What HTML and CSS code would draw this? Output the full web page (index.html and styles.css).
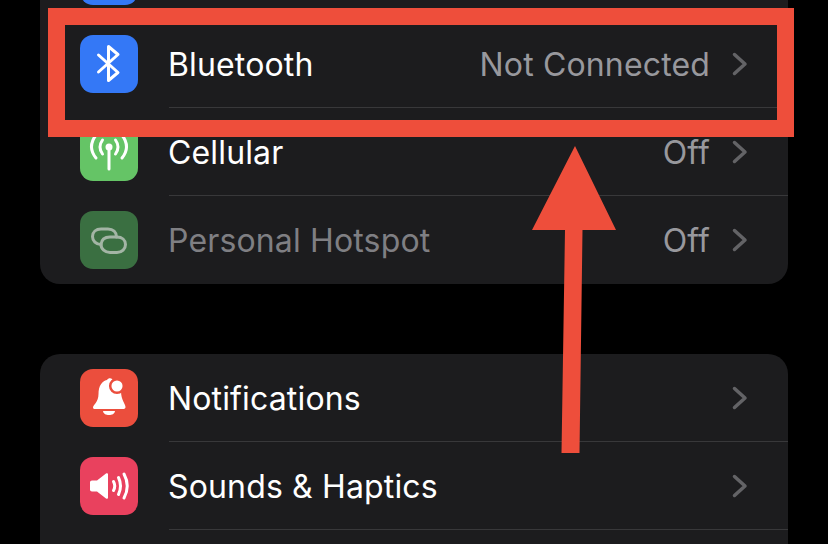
FILE: index.html
```html
<!DOCTYPE html>
<html lang="en">
<head>
    <meta charset="utf-8">
    <title>Settings</title>
    <link rel="stylesheet" href="styles.css">
</head>
<body>
    <div class="page">
        <div class="group group-first">
            <div class="row">
                <div class="icon icon-blue"></div>
                <div class="row-body"></div>
            </div>
            <div class="row">
                <div class="icon icon-blue">
                    <svg viewBox="0 0 58 58"><path class="stroke hair" d="M18.500 20 L38 37.500 L28.500 45.500 V11.500 L38 19.500 L18.500 37"/></svg>
                </div>
                <div class="row-body">
                    <span class="label">Bluetooth</span>
                    <span class="value">Not Connected</span>
                    <svg class="chevron" viewBox="0 0 16 24"><path d="M2.5 2.5 L13 12 L2.5 21.5"/></svg>
                </div>
            </div>
            <div class="row">
                <div class="icon icon-green">
                    <svg viewBox="0 0 58 58">
                        <path class="stroke hair" d="M29 24 V46"/>
                        <circle class="fill" cx="29" cy="24" r="3.500"/>
                        <path class="stroke hair" d="M22.500 17 Q17.500 24 22.500 31"/>
                        <path class="stroke hair" d="M35.500 17 Q40.500 24 35.500 31"/>
                        <path class="stroke hair" d="M16 12 Q7 24 16 35"/>
                        <path class="stroke hair" d="M42 12 Q51 24 42 35"/>
                    </svg>
                </div>
                <div class="row-body">
                    <span class="label">Cellular</span>
                    <span class="value">Off</span>
                    <svg class="chevron" viewBox="0 0 16 24"><path d="M2.5 2.5 L13 12 L2.5 21.5"/></svg>
                </div>
            </div>
            <div class="row row-disabled">
                <div class="icon icon-green-dim">
                    <svg viewBox="0 0 58 58">
                        <path class="stroke link" d="M36.500 26 C36.500 21 33 18 28 18 H21 C16 18 12.500 21 12.500 25.500 C12.500 30 16 33.500 21 33.500"/>
                        <path class="stroke link" d="M21 33.500 C21 38 25 41.500 30 41.500 H37 C42 41.500 45.500 38 45.500 33.500 C45.500 29 42 26 37 26 H30 C25 26 21.500 28.500 21 33.500 Z"/>
                    </svg>
                </div>
                <div class="row-body">
                    <span class="label">Personal Hotspot</span>
                    <span class="value">Off</span>
                    <svg class="chevron" viewBox="0 0 16 24"><path d="M2.5 2.5 L13 12 L2.5 21.5"/></svg>
                </div>
            </div>
        </div>

        <div class="group">
            <div class="row">
                <div class="icon icon-red">
                    <svg viewBox="0 0 58 58">
                        <path class="fill" d="M13 38.500 C13 36 18.500 33.500 18.500 25 C18.500 17 22 12 27 11 C28 9 31 9 32 10 L41 22 C41 31 45.500 35 45.500 38 C45.500 39.500 44.500 40 43 40 H15 C14 40 13 39.500 13 38.500 Z"/>
                        <path class="fill" d="M23 42 H35 C34.500 45 32 46 29 46 C26 46 23.500 45 23 42 Z"/>
                        <circle class="fill badge-ring" cx="37" cy="17" r="6.800"/>
                    </svg>
                </div>
                <div class="row-body">
                    <span class="label">Notifications</span>
                    <svg class="chevron" viewBox="0 0 16 24"><path d="M2.5 2.5 L13 12 L2.5 21.5"/></svg>
                </div>
            </div>
            <div class="row">
                <div class="icon icon-pink">
                    <svg viewBox="0 0 58 58">
                        <path class="fill" d="M12 23.500 H17 L26 16.500 C27 15.800 28 16.300 28 17.500 V40.500 C28 41.700 27 42.200 26 41.500 L17 34.500 H12 C10.800 34.500 10 33.700 10 32.500 V25.500 C10 24.300 10.800 23.500 12 23.500 Z"/>
                        <path class="stroke hair" d="M33.500 24.500 Q36 29 33.500 33.500"/>
                        <path class="stroke hair" d="M38.500 20.500 Q42.500 29 38.500 37.500"/>
                        <path class="stroke hair" d="M44 17 Q50.500 29 44 41"/>
                    </svg>
                </div>
                <div class="row-body">
                    <span class="label">Sounds &amp; Haptics</span>
                    <svg class="chevron" viewBox="0 0 16 24"><path d="M2.5 2.5 L13 12 L2.5 21.5"/></svg>
                </div>
            </div>
            <div class="row"></div>
        </div>

        <div class="callout"></div>
        <svg class="arrow" viewBox="0 0 828 544"><path d="M575 146 L616 230 L582.500 230 L579.500 453 L561.500 453 L565 230 L532 230 Z"/></svg>
    </div>
</body>
</html>
```

FILE: styles.css
```css
html, body {
    margin: 0;
    padding: 0;
    height: 100%;
    background-color: #000;
    overflow: hidden;
}
.page {
    position: relative;
    width: 828px;
    height: 544px;
    overflow: hidden;
    font-family: Inter, "Liberation Sans", sans-serif;
}
.group {
    margin: 0 40px 70px;
    background-color: #1c1c1e;
    border-radius: 20px;
    overflow: hidden;
}
.group-first {
    margin-top: -68px;
}
.row {
    display: flex;
    align-items: stretch;
    height: 88px;
    padding-left: 40px;
}
.icon {
    flex: none;
    width: 58px;
    height: 58px;
    margin-top: 15px;
    margin-right: 31px;
    border-radius: 13px;
}
.icon svg {
    display: block;
    width: 58px;
    height: 58px;
}
.icon-blue { background-color: #3478f6; }
.icon-green { background-color: #65c466; }
.icon-green-dim { background-color: #3a6f41; }
.icon-red { background-color: #eb4e3d; }
.icon-pink { background-color: #e9415e; }
.stroke {
    fill: none;
    stroke: #fff;
    stroke-width: 4;
    stroke-linecap: round;
    stroke-linejoin: round;
}
.hair {
    stroke-width: 3;
}
.link {
    stroke: #a3b5a5;
    stroke-width: 3;
}
.fill {
    fill: #fff;
}
.badge-ring {
    stroke: #eb4e3d;
    stroke-width: 2.500;
}
.row-body {
    flex: 1;
    display: flex;
    align-items: center;
    min-width: 0;
    padding-right: 40px;
    border-bottom: 1px solid #38383a;
}
.row-disabled .row-body {
    border-bottom-color: transparent;
}
.label {
    flex: 1;
    margin-left: -1px;
    padding-top: 2px;
    font-size: 32px;
    letter-spacing: 0.15px;
    color: #fff;
}
.value {
    margin-right: 22px;
    padding-top: 2px;
    font-size: 32px;
    letter-spacing: 0.15px;
    color: #98989d;
}
.chevron {
    flex: none;
    width: 16px;
    height: 24px;
    fill: none;
    stroke: #636366;
    stroke-width: 3.5;
    stroke-linecap: round;
    stroke-linejoin: round;
}
.row-disabled .label {
    color: #7f7f83;
}
.callout {
    position: absolute;
    left: 48px;
    top: 8px;
    width: 712px;
    height: 95px;
    border: 17px solid #ee4e3b;
}
.arrow {
    position: absolute;
    left: 0;
    top: 0;
    width: 828px;
    height: 544px;
    fill: #ee4e3b;
}
```
